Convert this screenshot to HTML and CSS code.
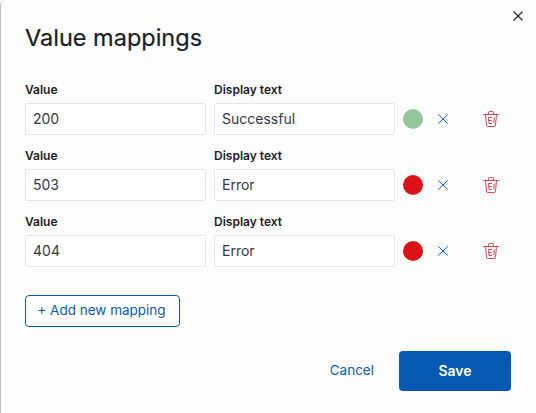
FILE: index.html
```html
<!DOCTYPE html>
<html>
<head>
    <link rel="stylesheet" href="styles.css">
</head>
<body>
    <div class="modal">
        <button class="close" aria-label="Close">
            <svg viewBox="0 0 10 10" width="10" height="10"><path d="M0.5 0.5L9.5 9.5M9.5 0.5L0.5 9.5" stroke="#1a1c21" stroke-width="1.1" fill="none"/></svg>
        </button>
        <h1 class="title">Value mappings</h1>

        <div class="rows">
            <div class="row">
                <div class="field">
                    <label>Value</label>
                    <input class="input" type="text" value="200">
                </div>
                <div class="field">
                    <label>Display text</label>
                    <input class="input" type="text" value="Successful">
                </div>
                <span class="dot green"></span>
                <svg class="clear" viewBox="0 0 10 10" width="10" height="10"><path d="M0.3 0.3L9.7 9.7M9.7 0.3L0.3 9.7" stroke="#0b64c0" stroke-width="1" fill="none"/></svg>
                <svg class="trash" viewBox="0 0 16 16" width="16" height="16"><path d="M0 3.5H16M5.5 3.5V1.5Q5.5 0.5 6.5 0.5H9.5Q10.5 0.5 10.5 1.5V3.5M2.5 3.5L3.5 14Q3.6 15.5 5 15.5H11Q12.4 15.5 12.5 14L13.5 3.5M9 6.5H5.5L6 12.5H9M5.7 9.5H8.5M11.3 6.5L10.8 12" stroke="#c9373a" stroke-width="0.9" fill="none"/></svg>
            </div>
            <div class="row">
                <div class="field">
                    <label>Value</label>
                    <input class="input" type="text" value="503">
                </div>
                <div class="field">
                    <label>Display text</label>
                    <input class="input" type="text" value="Error">
                </div>
                <span class="dot red"></span>
                <svg class="clear" viewBox="0 0 10 10" width="10" height="10"><path d="M0.3 0.3L9.7 9.7M9.7 0.3L0.3 9.7" stroke="#0b64c0" stroke-width="1" fill="none"/></svg>
                <svg class="trash" viewBox="0 0 16 16" width="16" height="16"><path d="M0 3.5H16M5.5 3.5V1.5Q5.5 0.5 6.5 0.5H9.5Q10.5 0.5 10.5 1.5V3.5M2.5 3.5L3.5 14Q3.6 15.5 5 15.5H11Q12.4 15.5 12.5 14L13.5 3.5M9 6.5H5.5L6 12.5H9M5.7 9.5H8.5M11.3 6.5L10.8 12" stroke="#c9373a" stroke-width="0.9" fill="none"/></svg>
            </div>
            <div class="row">
                <div class="field">
                    <label>Value</label>
                    <input class="input" type="text" value="404">
                </div>
                <div class="field">
                    <label>Display text</label>
                    <input class="input" type="text" value="Error">
                </div>
                <span class="dot red"></span>
                <svg class="clear" viewBox="0 0 10 10" width="10" height="10"><path d="M0.3 0.3L9.7 9.7M9.7 0.3L0.3 9.7" stroke="#0b64c0" stroke-width="1" fill="none"/></svg>
                <svg class="trash" viewBox="0 0 16 16" width="16" height="16"><path d="M0 3.5H16M5.5 3.5V1.5Q5.5 0.5 6.5 0.5H9.5Q10.5 0.5 10.5 1.5V3.5M2.5 3.5L3.5 14Q3.6 15.5 5 15.5H11Q12.4 15.5 12.5 14L13.5 3.5M9 6.5H5.5L6 12.5H9M5.7 9.5H8.5M11.3 6.5L10.8 12" stroke="#c9373a" stroke-width="0.9" fill="none"/></svg>
            </div>
        </div>

        <button class="add">+ Add new mapping</button>

        <div class="footer">
            <button class="cancel">Cancel</button>
            <button class="save">Save</button>
        </div>
    </div>
</body>
</html>
```

FILE: styles.css
```css
html, body {
    margin: 0;
    height: 100%;
    overflow: hidden;
    background: #fff;
}
body {
    font-family: Inter, "Liberation Sans", sans-serif;
    color: #1a1c21;
}
.modal {
    position: relative;
    box-sizing: border-box;
    width: 536px;
    height: 413px;
    padding: 22px 25px 0 24px;
    background: #fdfdfe;
    border-left: 1px solid #b9c1d0;
    border-top-left-radius: 6px;
}
.close {
    position: absolute;
    top: 11px;
    right: 13px;
    padding: 0;
    border: 0;
    background: none;
    line-height: 0;
}
.title {
    margin: 0;
    font-size: 23.5px;
    line-height: 32px;
    font-weight: 400;
    -webkit-text-stroke: 0.2px #1a1c21;
}
.rows {
    margin-top: 29px;
    display: flex;
    flex-direction: column;
    gap: 14px;
}
.row {
    display: flex;
    align-items: flex-end;
    height: 52px;
}
.field {
    width: 181px;
    margin-right: 8px;
    display: flex;
    flex-direction: column;
}
.field label {
    font-size: 12px;
    line-height: 14px;
    font-weight: 600;
    margin-bottom: 6px;
}
.input {
    box-sizing: border-box;
    width: 181px;
    height: 32px;
    padding: 0 7px 1px;
    border: 1px solid #e3e6ee;
    border-radius: 2px;
    background: #fff;
    font-family: inherit;
    font-size: 14px;
    color: #343741;
    outline: none;
}
.dot {
    width: 20px;
    height: 20px;
    margin: 0 0 6px 0;
    border-radius: 50%;
}
.green { background: #93c69b; }
.red { background: #db1319; }
.clear {
    margin: 0 0 11px 15px;
}
.trash {
    margin: 0 0 8px 35px;
}
.add {
    display: block;
    box-sizing: border-box;
    width: 155px;
    height: 32px;
    margin-top: 28px;
    padding: 0 2px 2px 0;
    border: 1px solid #0b5cb0;
    border-radius: 4px;
    background: #fff;
    color: #0b5cb0;
    font-family: inherit;
    font-size: 13.5px;
    font-weight: 400;
}
.footer {
    display: flex;
    justify-content: flex-end;
    align-items: center;
    margin-top: 24px;
}
.cancel {
    padding: 0 0 2px;
    margin-right: 25px;
    border: 0;
    background: none;
    color: #0b5cb0;
    font-family: inherit;
    font-size: 13.5px;
    font-weight: 400;
}
.save {
    width: 112px;
    height: 40px;
    padding: 0 0 2px;
    border: 0;
    border-radius: 4px;
    background: #0559b0;
    color: #fff;
    font-family: inherit;
    font-size: 14px;
    font-weight: 600;
}
```
